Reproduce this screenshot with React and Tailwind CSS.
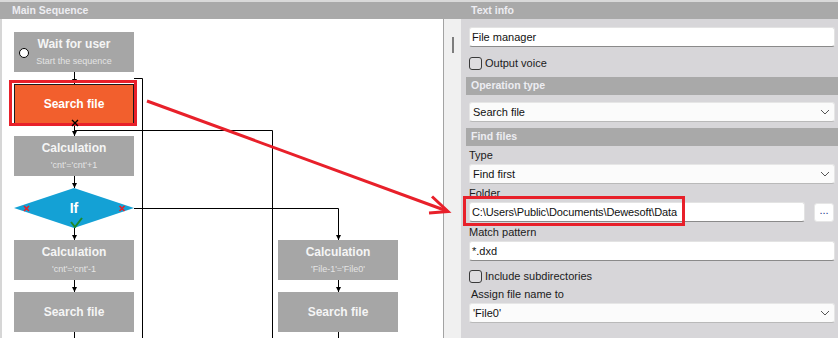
import React from "react";

// ─── FLOW BLOCKS ───────────────────────────────────────────────────────────
function Block({ title, sub, children, className = "bg-[#a6a6a6]" }) {
  return (
    <div className={`relative h-[40px] w-[120px] shrink-0 flex flex-col items-center justify-center gap-[4px] ${className}`}>
      {children}
      <div className="text-[12px] leading-[14px] font-bold text-[#f5f5f5]">{title}</div>
      {sub && <div className="text-[9px] leading-[12px] text-[#e4e4e4]">{sub}</div>}
    </div>
  );
}

function Decision() {
  return (
    <div className="relative h-[40px] w-[120px] shrink-0 flex items-center justify-center">
      <svg className="absolute inset-0" width="120" height="40" viewBox="0 0 120 40">
        <polygon points="0,20 60,0 120,20 60,40" fill="#14a1d5" />
        <path d="M10 18l5 5M15 18l-5 5" stroke="#e8202a" strokeWidth="1.6" />
        <path d="M105.5 18l5 5M110.5 18l-5 5" stroke="#e8202a" strokeWidth="1.6" />
        <path d="M57 34l4 5 7-9" stroke="#1c8a2a" strokeWidth="2" fill="none" />
      </svg>
      <span className="relative text-[14px] font-bold text-white leading-none">If</span>
    </div>
  );
}

function Head({ x, y }) {
  return <polygon points={`${x - 2.5},${y - 5} ${x + 2.5},${y - 5} ${x},${y}`} fill="#000" />;
}

function SequencePanel() {
  return (
    <div className="relative w-[443px] shrink-0 bg-white border-l-2 border-[#d6d6d6] flex font-['Liberation_Sans',Arial,sans-serif]">
      {/* connectors, page coordinates */}
      <svg className="absolute left-[-2px] top-0" width="443" height="319" viewBox="0 19 443 319">
        <g stroke="#000" strokeWidth="1" fill="none">
          <path d="M74.5 72v12" />
          <path d="M74.5 124v12" />
          <path d="M74.5 130.5H272.5V338" />
          <path d="M134 78.5h8.5V338" />
          <path d="M74.5 176v12" />
          <path d="M134 208.5h204.5V240" />
          <path d="M74.5 228v12" />
          <path d="M74.5 280v12" />
          <path d="M74.5 332v6" />
          <path d="M338.5 280v12" />
          <path d="M338.5 332v6" />
        </g>
        <Head x={74.5} y={84} />
        <Head x={74.5} y={136} />
        <Head x={74.5} y={188} />
        <Head x={74.5} y={240} />
        <Head x={74.5} y={292} />
        <Head x={338.5} y={240} />
        <Head x={338.5} y={292} />
      </svg>

      <div className="ml-[12px] pt-[13px] flex flex-col gap-[12px]">
        <Block title="Wait for user" sub="Start the sequence">
          <div className="absolute left-[5px] top-[16px] w-[10px] h-[10px] rounded-full bg-white border border-black" />
        </Block>
        <div className="relative h-[40px] w-[120px] shrink-0 bg-[#f25f2d] border border-[#1a1a1a] flex items-center justify-center">
          <span className="text-[12px] font-bold text-white">Search file</span>
          <div className="absolute -top-[5px] -left-[6px] -right-[4px] -bottom-[3px] border-[3px] border-[#e8202a]" />
          <svg className="absolute left-[56px] bottom-[-4px]" width="8" height="8" viewBox="0 0 8 8">
            <path d="M1 1l6 6M7 1l-6 6" stroke="#000" strokeWidth="1.4" />
          </svg>
        </div>
        <Block title="Calculation" sub="'cnt'='cnt'+1" />
        <Decision />
        <Block title="Calculation" sub="'cnt'='cnt'-1" />
        <Block title="Search file" />
      </div>

      <div className="ml-[144px] pt-[221px] flex flex-col gap-[12px]">
        <Block title="Calculation" sub="'File-1'='File0'" />
        <Block title="Search file" />
      </div>
    </div>
  );
}

// ─── PROPERTY CONTROLS ─────────────────────────────────────────────────────
function Section({ children, className = "" }) {
  return (
    <div className={`h-[18px] shrink-0 bg-[#a9a9a9] pl-[5px] flex items-center font-bold text-[10.5px] text-[#ededf2] ${className}`}>
      {children}
    </div>
  );
}

function Field({ value, className = "" }) {
  return (
    <div className={`h-[20px] shrink-0 bg-white border border-[#e3e3e3] border-b-[#8a8a8a] rounded-[3px] pl-[2px] flex items-center text-[#111] ${className}`}>
      {value}
    </div>
  );
}

function Select({ value, className = "" }) {
  return (
    <div className={`h-[20px] shrink-0 mx-[3px] bg-[#fbfbfb] border border-[#e6e6e6] border-b-[#b9b9b9] rounded-[3px] pl-[3px] pr-[4px] flex items-center justify-between text-[#111] ${className}`}>
      <span>{value}</span>
      <svg width="10" height="6" viewBox="0 0 10 6">
        <path d="M1 1l4 4 4-4" stroke="#555" strokeWidth="1" fill="none" />
      </svg>
    </div>
  );
}

function Check({ label, className = "" }) {
  return (
    <div className={`h-[13px] shrink-0 mx-[3px] flex items-center gap-[3px] ${className}`}>
      <div className="w-[13px] h-[13px] rounded-[3px] border border-[#3a3a3a] bg-[#dedde0]" />
      <span className="leading-[13px]">{label}</span>
    </div>
  );
}

function Label({ children, className = "" }) {
  return <div className={`shrink-0 mx-[3px] flex items-end pb-[1px] leading-[15px] ${className}`}>{children}</div>;
}

function Properties() {
  return (
    <div className="flex-1 flex flex-col pl-[5px] font-['Liberation_Sans',Arial,sans-serif] text-[11px] text-[#1b1b1b]">
      <Field value="File manager" className="mt-[8px] mx-[3px]" />
      <Check label="Output voice" className="mt-[10px]" />
      <Section className="mt-[7px]">Operation type</Section>
      <Select value="Search file" className="mt-[7px]" />
      <Section className="mt-[6px]">Find files</Section>
      <Label className="h-[18px]">Type</Label>
      <Select value="Find first" />
      <Label className="h-[18px]">Folder</Label>
      <div className="flex items-center shrink-0 ml-[3px] mr-[4px]">
        <div className="relative flex-1">
          <Field value="C:\Users\Public\Documents\Dewesoft\Data" className="tracking-[-0.12px]" />
          <div className="absolute left-[-6px] top-[-6px] w-[222px] h-[30px] border-[3px] border-[#e8202a]" />
        </div>
        <div className="ml-[9px] w-[20px] h-[19px] rounded-[3px] bg-white border border-[#e6e6e6] flex items-center justify-center leading-none text-[#1c3a8a] pb-[3px]">
          ...
        </div>
      </div>
      <Label className="h-[19px]">Match pattern</Label>
      <Field value="*.dxd" className="mx-[3px]" />
      <Check label="Include subdirectories" className="mt-[9px]" />
      <Label className="h-[20px] ml-[5px]">Assign file name to</Label>
      <Select value="'File0'" />
    </div>
  );
}

export default function App() {
  return (
    <div className="relative w-[838px] h-[338px] overflow-hidden bg-[#d7d6d9] flex flex-col">
      <div className="h-[2px] shrink-0 bg-[#d9d9d9]" />
      <div className="h-[17px] shrink-0 flex items-center bg-[#a9a9a9] font-['Liberation_Sans',Arial,sans-serif] font-bold text-[10.5px] text-[#ededf2]">
        <div className="w-[466px] pl-[12px]">Main Sequence</div>
        <div className="pl-[5px]">Text info</div>
      </div>
      <div className="flex-1 flex min-h-0">
        <SequencePanel />
        <div className="w-px shrink-0 bg-[#a3a3a3]" />
        <div className="w-[17px] shrink-0 bg-[#f0f0f0] pt-[18px] pl-[8px]">
          <div className="w-[2px] h-[16px] bg-[#7d7d7d]" />
        </div>
        <Properties />
      </div>

      {/* annotation arrow */}
      <svg className="absolute inset-0 pointer-events-none" width="838" height="338" viewBox="0 0 838 338">
        <g stroke="#e8202a" strokeWidth="3" fill="none">
          <path d="M147 101L447 211" />
          <path d="M432 196.5L448 211.5L429 213" />
        </g>
      </svg>
    </div>
  );
}
